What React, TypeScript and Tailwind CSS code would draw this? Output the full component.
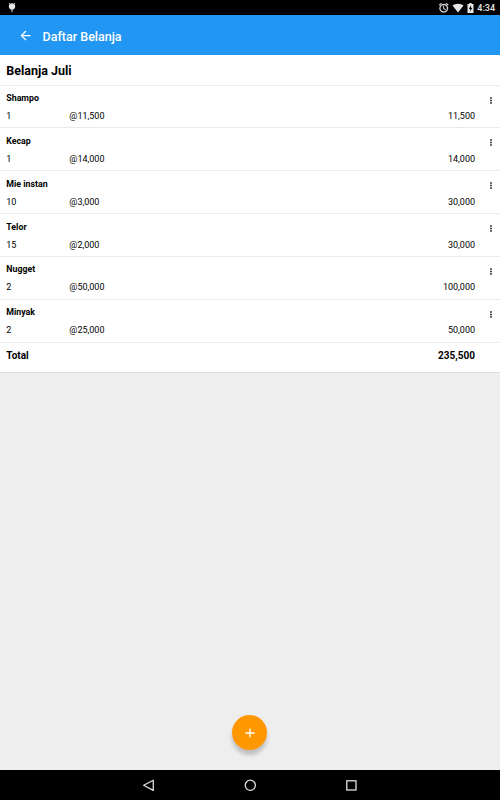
interface ShoppingItem {
  name: string;
  qty: number;
  price: number;
}

const items: ShoppingItem[] = [
  { name: 'Shampo', qty: 1, price: 11500 },
  { name: 'Kecap', qty: 1, price: 14000 },
  { name: 'Mie instan', qty: 10, price: 3000 },
  { name: 'Telor', qty: 15, price: 2000 },
  { name: 'Nugget', qty: 2, price: 50000 },
  { name: 'Minyak', qty: 2, price: 25000 },
];

const formatPrice = (value: number) => value.toLocaleString('en-US');

function StatusBar() {
  return (
    <div className="flex h-[15.4px] shrink-0 items-center bg-black pl-2 pr-[5px] text-[#e6e6e6]">
      {/* Debug notification */}
      <svg className="h-[11px] w-2" viewBox="0 0 8 11" fill="currentColor">
        <path d="M1.2.8 2.3 1.7a4 4 0 0 1 3.400 0L6.800.8l.4.4-.8 1c.6.6.8 1.200.8 2C7.200 6.300 5.900 7.800 4 7.800S.8 6.300.8 4.200c0-.8.2-1.400.8-2l-.8-1z" />
        <path d="M3.400 7.500h1.200v2.700H3.400z" opacity=".8" />
      </svg>
      <div className="ml-auto flex items-center">
        <svg className="size-[11.5px]" viewBox="0 0 24 24" fill="currentColor" stroke="currentColor" strokeWidth=".5">
          <path d="M22 5.720l-4.600-3.860-1.290 1.530 4.600 3.860L22 5.720zM7.880 3.390L6.600 1.860 2 5.710l1.290 1.530 4.590-3.850zM12.500 8H11v6l4.750 2.850.75-1.230-4-2.370V8zM12 4c-4.970 0-9 4.030-9 9s4.020 9 9 9c4.970 0 9-4.030 9-9s-4.030-9-9-9zm0 16c-3.870 0-7-3.130-7-7s3.130-7 7-7 7 3.130 7 7-3.130 7-7 7z" />
        </svg>
        <svg className="ml-[2.5px] h-[10px] w-[12px]" viewBox="0 0 12 10" fill="currentColor">
          <path d="M6 9.500.5 2.600C2 1.400 3.900.7 6 .7s4 .7 5.500 1.900z" />
        </svg>
        <svg className="ml-[3.5px] h-[10px] w-[7px]" viewBox="0 0 7 10" fill="currentColor">
          <path fillRule="evenodd" d="M2.300 0h2.400v1H6.500v9H.5V1h1.800zM4 2.300 1.800 5.900h1.400v2.500l2.100-3.700H4z" />
        </svg>
        <span className="ml-[3px] pt-[1.5px] text-[9px] leading-none font-medium">4:34</span>
      </div>
    </div>
  );
}

function AppBar() {
  return (
    <header className="flex h-[39.8px] shrink-0 items-center bg-[#2196f3] pl-[17.5px] pt-[1px] text-white">
      <svg className="size-[15px]" viewBox="0 0 24 24" fill="currentColor">
        <path d="M20 11H7.830l5.590-5.590L12 4l-8 8 8 8 1.410-1.410L7.830 13H20v-2z" />
      </svg>
      <h1 className="ml-[10px] mt-[2px] text-[12.5px] leading-none font-medium">Daftar Belanja</h1>
    </header>
  );
}

function ItemRow({ item }: { item: ShoppingItem }) {
  return (
    <li className="flex h-[42.83px] border-b border-[#eaeaea] pl-[6.3px] pr-[8px] pt-[6.5px]">
      <div className="flex-1">
        <p className="text-[8.8px] leading-[12px] font-bold">{item.name}</p>
        <div className="mt-[6px] flex text-[9px] leading-[12px]">
          <span className="w-[63px]">{item.qty}</span>
          <span>@{formatPrice(item.price)}</span>
          <span className="ml-auto">{formatPrice(item.qty * item.price)}</span>
        </div>
      </div>
      <button className="ml-[14px] flex h-[16px] w-[3px] items-center justify-center" aria-label="Menu">
        <svg className="h-[7px] w-[2px]" viewBox="0 0 2 7" fill="#111">
          <path d="M.2.2h1.600v1.600H.2zM.2 2.700h1.600v1.600H.2zM.2 5.200h1.600v1.600H.2z" />
        </svg>
      </button>
    </li>
  );
}

function NavBar() {
  return (
    <nav className="flex h-[30px] shrink-0 items-center justify-center gap-[88.5px] bg-black text-[#e0e0e0]">
      <svg className="size-[13px]" viewBox="0 0 13 13" fill="none" stroke="currentColor" strokeWidth="1.3">
        <path d="M11.300 1.200v10.200L1.700 6.300z" strokeLinejoin="round" />
      </svg>
      <svg className="size-[13px]" viewBox="0 0 13 13" fill="none" stroke="currentColor" strokeWidth="1.3">
        <circle cx="6.300" cy="6.300" r="5.100" />
      </svg>
      <svg className="size-[13px]" viewBox="0 0 13 13" fill="none" stroke="currentColor" strokeWidth="1.3">
        <rect x="1.800" y="1.800" width="9.200" height="9.200" />
      </svg>
    </nav>
  );
}

export default function App() {
  const total = items.reduce((sum, item) => sum + item.qty * item.price, 0);

  return (
    <div className="relative flex h-[800px] w-[500px] flex-col overflow-hidden bg-[#eeeeee] font-['Roboto',sans-serif] text-black">
      <StatusBar />
      <AppBar />

      <main className="flex-1">
        <section className="border-b border-[#dddddd] bg-white">
          <h2 className="h-[30.4px] border-b border-[#eaeaea] pl-[6.3px] pt-[8px] text-[12.5px] leading-[16px] font-bold">
            Belanja Juli
          </h2>
          <ul>
            {items.map((item) => (
              <ItemRow key={item.name} item={item} />
            ))}
          </ul>
          <div className="flex h-[29.2px] justify-between pl-[6.3px] pr-[25px] pt-[6.6px] text-[10px] leading-[14px] font-bold">
            <span>Total</span>
            <span>{formatPrice(total)}</span>
          </div>
        </section>
      </main>

      {/* Add button */}
      <button
        className="absolute bottom-[50px] left-[232.3px] flex size-[35px] items-center justify-center rounded-full bg-[#ff9800] text-white shadow-[0_5px_4px_rgba(0,0,0,0.2)]"
        aria-label="Tambah"
      >
        <svg className="size-[10px]" viewBox="0 0 10 10" fill="none" stroke="currentColor" strokeWidth="1.3">
          <path d="M5 .4v9.200M.4 5h9.200" />
        </svg>
      </button>

      <NavBar />
    </div>
  );
}
